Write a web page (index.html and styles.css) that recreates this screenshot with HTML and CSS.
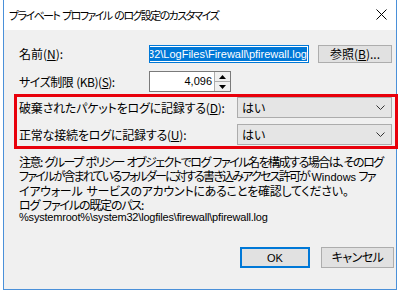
FILE: index.html
```html
<!DOCTYPE html>
<html lang="ja">
<head>
<meta charset="utf-8">
<link rel="stylesheet" href="styles.css">
</head>
<body>
<div class="window">
  <div class="titlebar">
    <span class="title">プライベート プロファイル のログ設定のカスタマイズ</span>
    <svg class="close" width="11" height="11" viewBox="0 0 11 11"><path d="M0.5 0.5 L10.5 10.5 M10.5 0.5 L0.5 10.5" stroke="#000" stroke-width="1" fill="none"/></svg>
  </div>
  <div class="content">
    <div class="row row-name">
      <span class="label lbl-short">名前(<u>N</u>):</span>
      <div class="textbox focused"><span class="sel latin">32\LogFiles\Firewall\pfirewall.log</span></div>
      <button class="btn browse">参照(<u>B</u>)...</button>
    </div>
    <div class="row row-size">
      <span class="label lbl-short lbl-size">サイズ制限 (KB)(<u>S</u>):</span>
      <div class="spin">
        <span class="num latin">4,096</span>
        <div class="spinbtns">
          <span class="sb"><svg width="7" height="4" viewBox="0 0 7 4"><path d="M0 4 L3.5 0 L7 4Z" fill="#000"/></svg></span>
          <span class="sb"><svg width="7" height="4" viewBox="0 0 7 4"><path d="M0 0 L3.5 4 L7 0Z" fill="#000"/></svg></span>
        </div>
      </div>
    </div>
    <div class="group">
      <div class="row row-combo">
        <span class="label lbl-long">破棄されたパケットをログに記録する(<u>D</u>):</span>
        <div class="combo"><span>はい</span><svg width="9" height="5" viewBox="0 0 9 5"><path d="M0.5 0.5 L4.5 4.5 L8.5 0.5" stroke="#333" fill="none"/></svg></div>
      </div>
      <div class="row row-combo">
        <span class="label lbl-long">正常な接続をログに記録する(<u>U</u>):</span>
        <div class="combo"><span>はい</span><svg width="9" height="5" viewBox="0 0 9 5"><path d="M0.5 0.5 L4.5 4.5 L8.5 0.5" stroke="#333" fill="none"/></svg></div>
      </div>
    </div>
    <div class="note">
      <div class="l1">注意: グループ ポリシー オブジェクトでログ ファイル名を構成する場合は、そのログ</div>
      <div class="l2">ファイルが含まれているフォルダーに対する書き込みアクセス許可が <span class="latin">Windows</span> ファ</div>
      <div class="l3">イアウォール サービスのアカウントにあることを確認してください。</div>
      <div class="l4">ログ ファイルの既定のパス:</div>
      <div class="l5 latin">%systemroot%\system32\logfiles\firewall\pfirewall.log</div>
    </div>
    <div class="buttons">
      <button class="btn ok"><span class="latin">OK</span></button>
      <button class="btn cancel">キャンセル</button>
    </div>
  </div>
</div>
</body>
</html>
```
FILE: styles.css
```css
html, body {
  margin: 0;
  padding: 0;
  background: #ffffff;
}
body {
  width: 400px;
  height: 292px;
  overflow: hidden;
  font-family: "Noto Sans CJK JP", "Noto Sans", sans-serif;
  font-size: 12px;
  font-feature-settings: "palt";
  color: #000;
}
.latin {
  font-family: "Liberation Sans", Arial, sans-serif;
  font-size: 11px;
  letter-spacing: 0;
}
.window {
  margin-left: 3px;
  width: 392px;
  height: 289px;
  border-left: 1px solid #4a90d9;
  border-right: 1px solid #4a90d9;
  border-bottom: 1px solid #4a90d9;
  background: #f0f0f0;
  display: flex;
  flex-direction: column;
}
.titlebar {
  height: 30px;
  background: #ffffff;
  display: flex;
  align-items: center;
  justify-content: space-between;
  padding: 0 9px 0 5px;
  flex: none;
}
.title {
  font-size: 11px;
  letter-spacing: -1.6px;
  word-spacing: 2px;
  line-height: 14px;
  margin-top: -1px;
  white-space: nowrap;
}
.close {
  display: block;
  margin-top: -1px;
}
.content {
  padding: 15px 4px 0 15px;
  display: flex;
  flex-direction: column;
}
.row {
  display: flex;
  align-items: center;
}
.label {
  flex: none;
  line-height: 14px;
  white-space: nowrap;
}
.lbl-short { width: 130px; }
.lbl-long { width: 218px; letter-spacing: -0.2px; }
.lbl-size { letter-spacing: -0.5px; word-spacing: 1px; }
u { text-decoration: underline; text-underline-offset: 1px; }
.row-name { height: 18px; }
.textbox {
  box-sizing: border-box;
  width: 160px;
  height: 18px;
  background: #fff;
  border: 1px solid #0078d7;
  overflow: hidden;
  display: flex;
  align-items: center;
  justify-content: flex-end;
  padding-right: 1px;
}
.sel {
  background: #0078d7;
  color: #fff;
  line-height: 14px;
  white-space: nowrap;
  flex: none;
}
.btn {
  font-family: inherit;
  font-size: 12px;
  font-feature-settings: "palt";
  color: #000;
  background: #e1e1e1;
  border: 1px solid #adadad;
  padding: 0;
  margin: 0;
  box-sizing: border-box;
  line-height: 14px;
}
.browse {
  margin-left: 9px;
  width: 74px;
  height: 18px;
}
.row-size { height: 21px; margin-top: 8px; }
.spin {
  box-sizing: border-box;
  width: 82px;
  height: 21px;
  background: #fff;
  border: 1px solid #7a7a7a;
  display: flex;
  align-items: stretch;
}
.num {
  flex: 1;
  text-align: right;
  padding-right: 2px;
  line-height: 19px;
}
.spinbtns {
  width: 15px;
  display: flex;
  flex-direction: column;
  border-left: 1px solid #adadad;
}
.sb {
  flex: 1;
  display: flex;
  align-items: center;
  justify-content: center;
  background: #f0f0f0;
}
.sb + .sb { border-top: 1px solid #adadad; }
.group {
  margin: 2px -6px 0 -5px;
  border: 3px solid #e8000b;
  padding: 0 3px 1px 2px;
  display: flex;
  flex-direction: column;
  gap: 6px;
}
.row-combo { height: 21px; }
.combo {
  box-sizing: border-box;
  flex: 1;
  height: 21px;
  background: #e5e5e5;
  border: 1px solid #acacac;
  display: flex;
  align-items: center;
  justify-content: space-between;
  padding: 0 6px 0 4px;
}
.combo span { line-height: 14px; }
.note {
  margin-top: 6px;
  line-height: 13.5px;
  white-space: nowrap;
  word-spacing: 1.5px;
}
.l1 { letter-spacing: -1.5px; }
.l2 { letter-spacing: -1.78px; }
.l3 { letter-spacing: -0.25px; }
.l4 { letter-spacing: -1.2px; }
.l5 { letter-spacing: -0.2px; word-spacing: 0; }
.buttons {
  margin-top: 22px;
  margin-right: -2px;
  display: flex;
  justify-content: flex-end;
  gap: 11px;
}
.ok {
  width: 70px;
  height: 21px;
  border: 2px solid #0078d7;
}
.cancel {
  width: 73px;
  height: 21px;
  letter-spacing: -0.5px;
}
```
